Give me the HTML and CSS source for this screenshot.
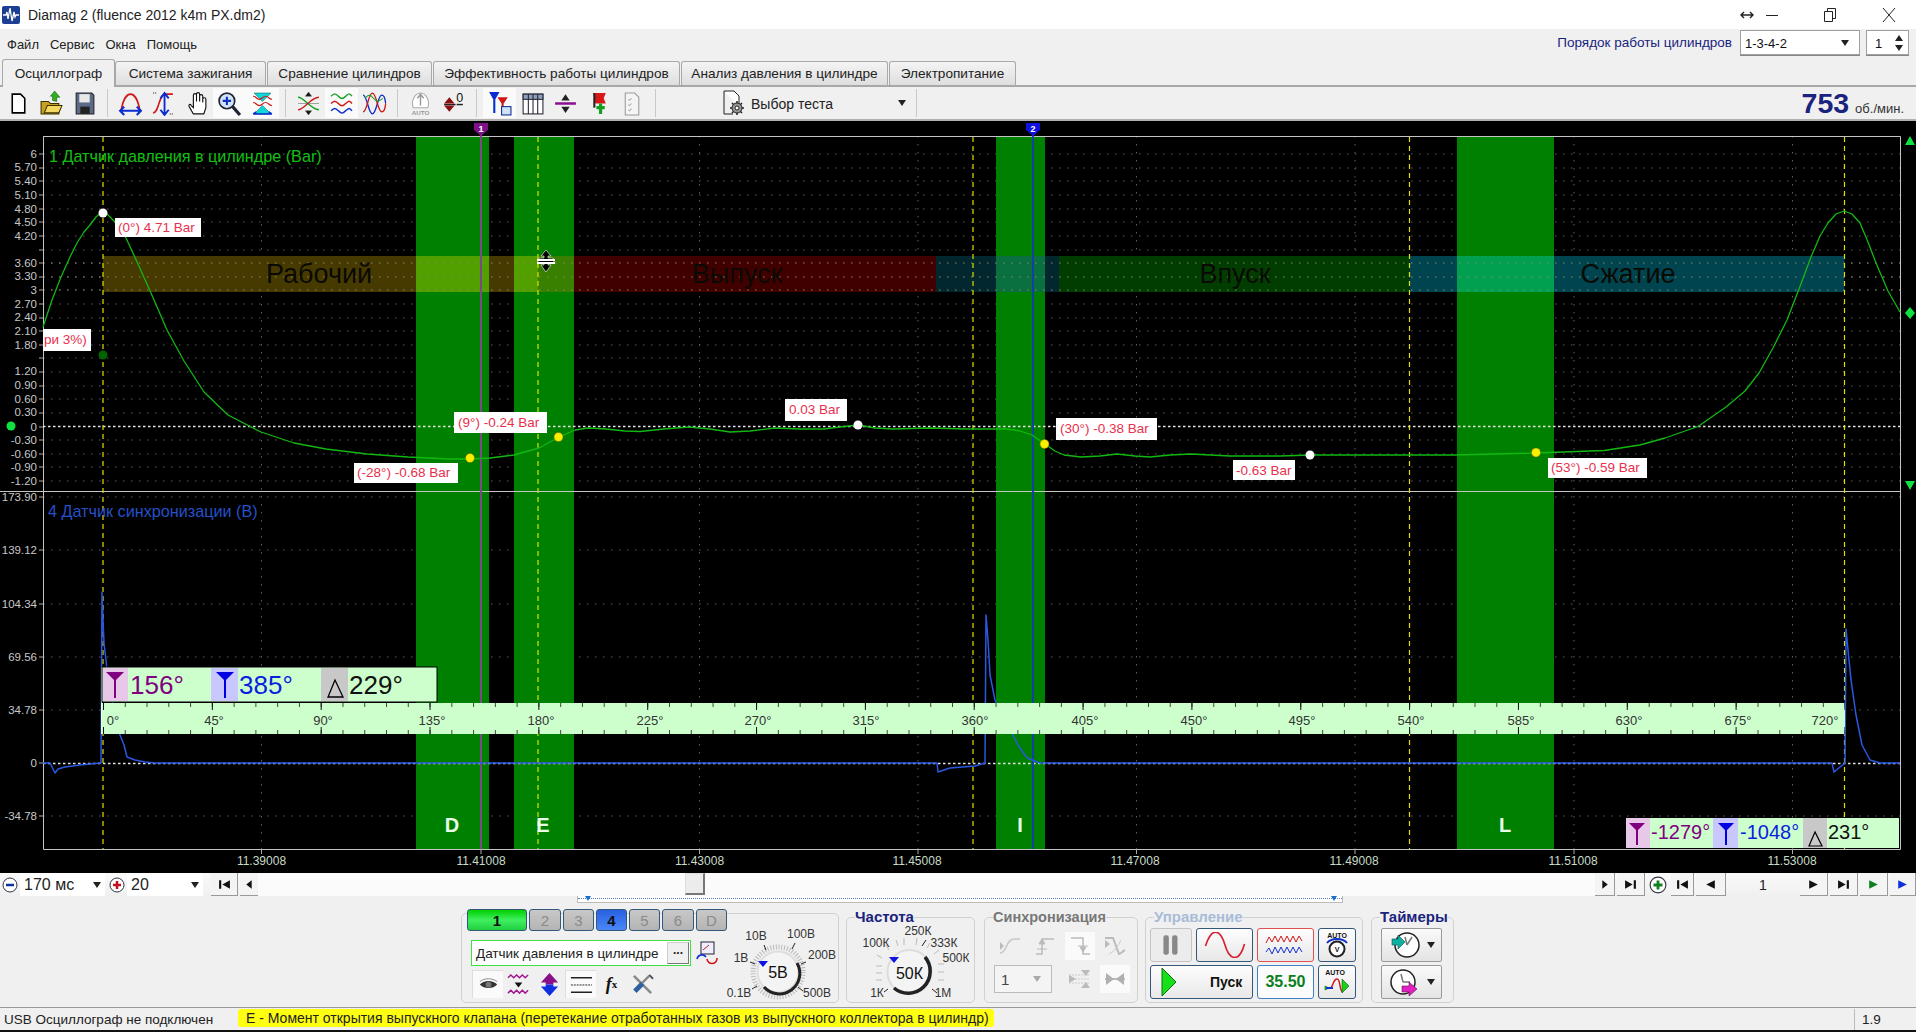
FILE: index.html
```html
<!DOCTYPE html>
<html lang="ru">
<head>
<meta charset="utf-8">
<title>Diamag 2</title>
<link rel="stylesheet" href="styles.css">
</head>
<body>
<div class="app">

<header class="titlebar">
  <svg class="app-icon" viewBox="0 0 18 18"><rect width="18" height="18" rx="2" fill="#1c3f94"/><path d="M1 9h3l1-3 1 7 2-11 2 13 2-9 1 5 1-2h3" fill="none" stroke="#fff" stroke-width="1.3"/></svg>
  <span class="title-text">Diamag 2 (fluence 2012 k4m PX.dm2)</span>
  <div class="win-controls">
    <svg class="wc-resize" viewBox="0 0 14 10"><path d="M1 5h12M4 2 1 5l3 3M10 2l3 3-3 3" fill="none" stroke="#222" stroke-width="1.4"/></svg>
    <svg class="wc-min" viewBox="0 0 12 12"><path d="M0 6.5h12" stroke="#222" stroke-width="1"/></svg>
    <svg class="wc-max" viewBox="0 0 12 14"><path d="M.5 3.5h8v10h-8zM3.5 3.5v-3h8v10h-3" fill="none" stroke="#222"/></svg>
    <svg class="wc-close" viewBox="0 0 14 14"><path d="M1 0l12 14M13 0 1 14" stroke="#222" stroke-width="1"/></svg>
  </div>
</header>

<div class="menurow">
  <nav class="menu"><span>Файл</span><span>Сервис</span><span>Окна</span><span>Помощь</span></nav>
  <div class="order">
    <span class="order-label">Порядок работы цилиндров</span>
    <div class="combo order-combo"><span>1-3-4-2</span><i class="arrow-down"></i></div>
    <div class="combo order-spin"><span>1</span><div class="spin"><i class="arrow-up"></i><i class="arrow-down"></i></div></div>
  </div>
</div>

<div class="tabs">
  <div class="tab active tab-a">Осциллограф</div>
  <div class="tab tab-b">Система зажигания</div>
  <div class="tab tab-c">Сравнение цилиндров</div>
  <div class="tab tab-d">Эффективность работы цилиндров</div>
  <div class="tab tab-e">Анализ давления в цилиндре</div>
  <div class="tab tab-f">Электропитание</div>
</div>

<div class="toolbar">
  <div class="tb"><svg viewBox="0 0 24 24"><path d="M6 3h8l4 4v14H6z" fill="#fff" stroke="#000" stroke-width="1.5"/></svg></div>
  <div class="tb"><svg viewBox="0 0 24 24"><path d="M2 10h7l2 2h8v10H2z" fill="#c8a020" stroke="#3a3000"/><path d="M5 21l3-7h14l-3 7z" fill="#f5d860" stroke="#3a3000"/><path d="M13 9V5h-2l4-5 5 6h-3v4z" fill="#30b020" stroke="#0a5000" stroke-width=".5"/></svg></div>
  <div class="tb"><svg viewBox="0 0 24 24"><path d="M4 2h15l2 2v18H4z" fill="#5a6a88" stroke="#222"/><rect x="7" y="3" width="10" height="8" fill="#e8e8e8"/><rect x="8" y="15" width="9" height="7" fill="#222"/></svg></div>
  <i class="sep"></i>
  <div class="tb"><svg viewBox="0 0 24 24"><path d="M3 19C5 7 9 3 12 3s7 4 9 16" fill="none" stroke="#d01818" stroke-width="1.6"/><path d="M2 19h20M6 15l-4 4 4 4M18 15l4 4-4 4" fill="none" stroke="#0a2cd0" stroke-width="2"/></svg></div>
  <div class="tb"><svg viewBox="0 0 24 24"><path d="M2 21c6 0 5-18 12-18 3 0 4 0 7 0" fill="none" stroke="#d01818" stroke-width="1.5"/><path d="M13 22V3M9 7l4-5 4 5M9 18l4 5 4-5" fill="none" stroke="#0a2cd0" stroke-width="1.8"/><path d="M2 2h4M18 22h4" stroke="#222" stroke-dasharray="1 1"/></svg></div>
  <div class="tb"><svg viewBox="0 0 24 24"><path d="M9 22l-4-7c-1-2 1-3 2-1l2 2V4c0-2 3-2 3 0v6V3c0-2 3-2 3 0v7V5c0-2 3-2 3 0v6-3c0-2 3-2 3 0v8l-2 6z" fill="#fff" stroke="#111" stroke-width="1.1"/></svg></div>
  <div class="tb on"><svg viewBox="0 0 24 24"><circle cx="9.5" cy="9.5" r="7.5" fill="#cfe2f6" stroke="#223" stroke-width="1.6"/><path d="M9.5 5.500v8M5.500 9.500h8" stroke="#1030c0" stroke-width="2"/><path d="M15 15l7 8" stroke="#223" stroke-width="3"/></svg></div>
  <div class="tb on"><svg viewBox="0 0 24 24"><path d="M4 2h16l-8 8zM12 14l8 8H4z" fill="#10d8d8" stroke="#087070" stroke-width=".6"/><path d="M3 5c3 0 3 3 6 3s3-3 6-3 3 3 6 3M3 11c3 0 3 3 6 3s3-3 6-3 3 3 6 3" fill="none" stroke="#d01818" stroke-width="1.1"/><path d="M3 22h18M3 22l3-2M21 22l-3-2" stroke="#0a2cd0" stroke-width="1.4" fill="none"/></svg></div>
  <i class="sep"></i>
  <div class="tb"><svg viewBox="0 0 24 24"><path d="M2 6c6 0 12 12 20 12" fill="none" stroke="#10a020" stroke-width="1.3"/><path d="M2 18C8 18 14 6 22 6" fill="none" stroke="#d01818" stroke-width="1.3"/><path d="M12 1l-3 4h6zM12 23l-3-4h6zM2 12h20" fill="#111" stroke="#555" stroke-width=".5"/></svg></div>
  <div class="tb on"><svg viewBox="0 0 24 24"><path d="M2 5c3-3 4-3 7 0s4 3 7 0 4-3 6 0" fill="none" stroke="#10a020" stroke-width="1.4"/><path d="M2 12c3-3 4-3 7 0s4 3 7 0 4-3 6 0" fill="none" stroke="#d01818" stroke-width="1.4"/><path d="M2 19c3-3 4-3 7 0s4 3 7 0 4-3 6 0" fill="none" stroke="#0a2cd0" stroke-width="1.4"/></svg></div>
  <div class="tb"><svg viewBox="0 0 24 24"><path d="M1 4c4 0 5 18 9 18s5-18 9-18 3 8 4 8" fill="none" stroke="#0a2cd0" stroke-width="1.3"/><path d="M1 20c4 0 5-18 9-18s5 18 9 18 3-8 4-8" fill="none" stroke="#d01818" stroke-width="1.3"/><path d="M3 7c3-4 5-4 8 0s5 3 9 0" fill="none" stroke="#10a020"/></svg></div>
  <i class="sep"></i>
  <div class="tb"><svg viewBox="0 0 24 24"><path d="M12 2a8 10 0 0 0-7 14h14A8 10 0 0 0 12 2z" fill="#fff" stroke="#aaa"/><path d="M12 3v11M9 7l3-4 3 4" fill="none" stroke="#999" stroke-width="1.4"/><text class="tb-auto" x="12" y="23">AUTO</text></svg></div>
  <div class="tb"><svg viewBox="0 0 24 24"><path d="M3 13h11" stroke="#222" stroke-width="1.4"/><path d="M8 6l5 6H3zM8 20l-5-6h10z" fill="#8a1010"/><text class="tb-zero" x="18" y="11">0</text><path d="M15 13h6" stroke="#222" stroke-width="1.4"/></svg></div>
  <i class="sep"></i>
  <div class="tb on"><svg viewBox="0 0 24 24"><path d="M2 1h10L8 8v13H6V8z" fill="#0a2cd0"/><path d="M10 6h10l-4 6v6h-2v-6z" fill="#d01818"/><rect x="14" y="15" width="9" height="8" fill="#cfe0f8" stroke="#0a2c90"/></svg></div>
  <div class="tb"><svg viewBox="0 0 24 24"><rect x="3" y="3" width="19" height="19" fill="#fff" stroke="#223"/><rect x="3" y="3" width="19" height="5" fill="#8ea0b8" stroke="#223"/><path d="M8 3v19M12.500 3v19M17 3v19" stroke="#223"/></svg></div>
  <div class="tb"><svg viewBox="0 0 24 24"><path d="M2 12h20" stroke="#8a1090" stroke-width="2.400"/><path d="M12 3l-4 6h8zM12 21l-4-6h8z" fill="#222"/></svg></div>
  <div class="tb"><svg viewBox="0 0 24 24"><path d="M7 2h12l-2 5 2 5H9" fill="#d81818"/><path d="M8 2v14" stroke="#222" stroke-width="2"/><path d="M10 16h8M14 12v10" stroke="#10a020" stroke-width="3"/></svg></div>
  <div class="tb"><svg viewBox="0 0 24 24"><path d="M6 2h9l4 4v17H6z" fill="#f4f4f4" stroke="#999"/><path d="M9 8l1 1 2-2M9 13l1 1 2-2M9 18l1 1 2-2" fill="none" stroke="#aaa"/></svg></div>
  <i class="sep sep-wide"></i>
  <div class="test-select">
    <svg viewBox="0 0 24 26"><path d="M3 1h10l5 5v10" fill="#fff" stroke="#222"/><path d="M3 1v23h9" fill="none" stroke="#222"/><circle cx="16" cy="18" r="5" fill="#999" stroke="#222"/><circle cx="16" cy="18" r="2" fill="#fff" stroke="#222"/><path d="M16 11v2M16 23v2M9 18h2M21 18h2M11 13l1.500 1.500M21 23l-1.500-1.500M11 23l1.500-1.500M21 13l-1.500 1.500" stroke="#222" stroke-width="1.500"/></svg>
    <span>Выбор теста</span>
    <i class="arrow-down"></i>
  </div>
  <i class="sep sep-end"></i>
  <div class="rpm"><b>753</b><span>об./мин.</span></div>
</div>

<svg class="plot" viewBox="0 121 1916 752" preserveAspectRatio="none">
  <defs>
    <pattern id="minor" patternUnits="userSpaceOnUse" x="103" y="703" width="21.77" height="31"><path d="M.5 0v4M.5 27v4" stroke="#444"/></pattern>
    <pattern id="major" patternUnits="userSpaceOnUse" x="103" y="703" width="108.84" height="31"><path d="M.5 0v7M.5 24v7" stroke="#111"/></pattern>
  </defs>
  <rect x="0" y="121" width="1916" height="752" fill="#000"/>

  <path class="grid" d="M43 154H1900M43 168H1900M43 181H1900M43 195H1900M43 209H1900M43 222H1900M43 236H1900M43 250H1900M43 263H1900M43 277H1900M43 290H1900M43 304H1900M43 318H1900M43 331H1900M43 345H1900M43 358H1900M43 372H1900M43 386H1900M43 399H1900M43 413H1900M43 440H1900M43 454H1900M43 467H1900M43 481H1900M43 497H1900M43 550H1900M43 604H1900M43 657H1900M43 710H1900M43 816H1900"/>
  <path class="grid" d="M261.500 136V849M481 136V849M699.500 136V849M918 136V849M1136.500 136V849M1355 136V849M1574 136V849M1792.500 136V849"/>

  <rect class="band" x="416" y="137" width="73" height="712"/>
  <rect class="band" x="514" y="137" width="60" height="712"/>
  <rect class="band" x="996" y="137" width="49" height="712"/>
  <rect class="band" x="1457" y="137" width="97" height="712"/>

  <rect x="103" y="256" width="435" height="36" fill="#463a00"/>
  <rect x="538" y="256" width="398" height="36" fill="#400000"/>
  <rect x="936" y="256" width="123" height="36" fill="#02272e"/>
  <rect x="1059" y="256" width="350.500" height="36" fill="#013d00"/>
  <rect x="1409.500" y="256" width="435" height="36" fill="#00444f"/>
  <rect x="416" y="256" width="73" height="36" fill="#52a000"/>
  <rect x="514" y="256" width="24" height="36" fill="#52a000"/>
  <rect x="538" y="256" width="36" height="36" fill="#3a8000"/>
  <rect x="996" y="256" width="49" height="36" fill="#0a7040"/>
  <rect x="1457" y="256" width="97" height="36" fill="#00a050"/>
  <path class="grid-dim" d="M43 263H1900M43 277H1900M43 290H1900"/>

  <text class="phase" x="319" y="283">Рабочий</text>
  <text class="phase" x="737" y="283">Выпуск</text>
  <text class="phase" x="1235" y="283">Впуск</text>
  <text class="phase" x="1628" y="283">Сжатие</text>

  <path class="plot-frame" d="M43 136.500H1900.500V849.500H43.500V136.500M0 491.500H1900.500"/>
  <path class="zero" d="M43 426.500H1900M43 763.500H1900"/>
  <path class="yellow" d="M103 137V849M538 137V849M973 137V849M1409.500 137V849M1844.500 137V849"/>

  <path class="cursor-1" d="M481 128V849"/>
  <path class="cursor-2" d="M1033 128V849"/>
  <path d="M474 123h14v7l-7 6-7-6z" fill="#80108a"/>
  <text class="flag" x="481" y="132">1</text>
  <path d="M1026 123h14v7l-7 6-7-6z" fill="#1010e0"/>
  <text class="flag" x="1033" y="132">2</text>

  <polyline class="curve" points="43,327 52,300 61,277 70,257 77,243 84,232 90,225 96,217 100,213.500 103,212.500 107,214 114,221 120,229 126,238 138,264 151,293 167,330 184,361 204,392 228,415 261,432 294,443 326,449 367,454 408,457 449,459 469,459 490,458 514,455 539,448 559,437 575,430 588,428 606,429 625,431 640,431.500 664,429 689,427 710,429 730,432 750,431 775,428 800,429 824,429 840,427 858,425 875,428 893,429 930,428 966,429 1007,429 1020,431 1032,435 1045,444 1055,451 1064,455 1081,457 1100,456 1117,454 1135,456 1150,457 1170,455 1191,454 1230,456 1280,456 1310,455 1454,455 1536,453 1604,450.500 1640,445 1665,438 1698,426.500 1726,407 1745,391 1759,373 1773,348 1787,320 1799,289 1811,257 1820,236 1828,223 1836,214 1844,211 1852,214 1860,223 1868,242 1876,263 1888,291 1900,312"/>
  <polyline class="sync" points="43,763 50,763 55,773 58,769 65,767 80,765 100,763 101,763 102,592 103,620 104,643 106,660 108,680 112,700 120,735 124,745 127,757 135,760 145,762 155,763 937,763 938,772 950,768 975,766 985,763 986,615 988,640 990,675 995,700 1005,725 1012,733 1018,745 1027,758 1040,763 1832,763 1834,772 1845,763 1846,629 1848,650 1851,680 1856,715 1862,745 1870,760 1880,763 1900,763"/>

  <circle class="dot-w" cx="103" cy="213" r="4.500"/>
  <circle cx="103" cy="355" r="4.500" fill="#006400"/>
  <circle cx="11" cy="426" r="4.500" fill="#10e040"/>
  <circle class="dot-y" cx="470" cy="458" r="4.500"/>
  <circle class="dot-y" cx="558.500" cy="437" r="4.500"/>
  <circle class="dot-w" cx="858" cy="425" r="4.500"/>
  <circle class="dot-y" cx="1044.500" cy="444" r="4.500"/>
  <circle class="dot-w" cx="1310" cy="455" r="4.500"/>
  <circle class="dot-y" cx="1536" cy="452.500" r="4.500"/>

  <rect class="tag" x="115" y="218" width="86" height="19"/><text class="tag-t" x="118" y="232">(0°) 4.71 Bar</text>
  <rect class="tag" x="43" y="329" width="48" height="22"/><text class="tag-t" x="44" y="344">ри 3%)</text>
  <rect class="tag" x="354" y="463" width="104" height="20"/><text class="tag-t" x="357" y="477">(-28°) -0.68 Bar</text>
  <rect class="tag" x="454" y="412" width="93" height="21"/><text class="tag-t" x="458" y="427">(9°) -0.24 Bar</text>
  <rect class="tag" x="785" y="399" width="62" height="22"/><text class="tag-t" x="789" y="414">0.03 Bar</text>
  <rect class="tag" x="1056" y="418" width="101" height="22"/><text class="tag-t" x="1060" y="433">(30°) -0.38 Bar</text>
  <rect class="tag" x="1233" y="460" width="62" height="20"/><text class="tag-t" x="1236" y="475">-0.63 Bar</text>
  <rect class="tag" x="1548" y="458" width="99" height="20"/><text class="tag-t" x="1551" y="472">(53°) -0.59 Bar</text>

  <text class="sig-1" x="49" y="162">1 Датчик давления в цилиндре (Bar)</text>
  <text class="sig-4" x="48" y="517">4 Датчик синхронизации (В)</text>

  <g class="axis">
    <text x="37" y="158">6</text><text x="37" y="171">5.70</text><text x="37" y="185">5.40</text><text x="37" y="199">5.10</text><text x="37" y="213">4.80</text><text x="37" y="226">4.50</text><text x="37" y="240">4.20</text><text x="37" y="267">3.60</text><text x="37" y="280">3.30</text><text x="37" y="294">3</text><text x="37" y="308">2.70</text><text x="37" y="321">2.40</text><text x="37" y="335">2.10</text><text x="37" y="349">1.80</text><text x="37" y="375">1.20</text><text x="37" y="389">0.90</text><text x="37" y="403">0.60</text><text x="37" y="416">0.30</text><text x="37" y="431">0</text><text x="37" y="444">-0.30</text><text x="37" y="458">-0.60</text><text x="37" y="471">-0.90</text><text x="37" y="485">-1.20</text>
    <text x="37" y="501">173.90</text><text x="37" y="554">139.12</text><text x="37" y="608">104.34</text><text x="37" y="661">69.56</text><text x="37" y="714">34.78</text><text x="37" y="767">0</text><text x="37" y="820">-34.78</text>
  </g>
  <path class="axis-tick" d="M39 154h4M39 168h4M39 181h4M39 195h4M39 209h4M39 222h4M39 236h4M39 250h4M39 263h4M39 277h4M39 290h4M39 304h4M39 318h4M39 331h4M39 345h4M39 358h4M39 372h4M39 386h4M39 399h4M39 413h4M39 427h4M39 440h4M39 454h4M39 467h4M39 481h4M39 497h4M39 550h4M39 604h4M39 657h4M39 710h4M39 763h4M39 816h4M261.500 849v5M481 849v5M699.500 849v5M918 849v5M1136.500 849v5M1355 849v5M1574 849v5M1792.500 849v5"/>

  <g class="time">
    <text x="261.500" y="865">11.39008</text><text x="481" y="865">11.41008</text><text x="699.500" y="865">11.43008</text><text x="917" y="865">11.45008</text><text x="1135" y="865">11.47008</text><text x="1354" y="865">11.49008</text><text x="1573" y="865">11.51008</text><text x="1792" y="865">11.53008</text>
  </g>

  <g class="letters"><text x="452" y="832">D</text><text x="543" y="832">E</text><text x="1020" y="832">I</text><text x="1505" y="832">L</text></g>

  <rect x="101" y="703" width="1744" height="31" fill="#ccffcc"/>
  <rect x="103" y="703" width="1742" height="31" fill="url(#minor)"/>
  <rect x="103" y="703" width="1742" height="31" fill="url(#major)"/>
  <path d="M101.500 667V734" stroke="#e8ffe8"/>
  <g class="deg">
    <text x="113" y="725">0°</text><text x="214" y="725">45°</text><text x="323" y="725">90°</text><text x="432" y="725">135°</text><text x="541" y="725">180°</text><text x="650" y="725">225°</text><text x="758" y="725">270°</text><text x="866" y="725">315°</text><text x="975" y="725">360°</text><text x="1085" y="725">405°</text><text x="1194" y="725">450°</text><text x="1302" y="725">495°</text><text x="1411" y="725">540°</text><text x="1521" y="725">585°</text><text x="1629" y="725">630°</text><text x="1738" y="725">675°</text><text x="1825" y="725">720°</text>
  </g>

  <rect x="102" y="667" width="335" height="35" fill="#ccffcc" stroke="#000"/>
  <rect x="103" y="668" width="25" height="33" fill="#e8c8e8"/>
  <rect x="211" y="668" width="27" height="33" fill="#c8c8ff"/>
  <rect x="321" y="668" width="27" height="33" fill="#c8c8c8"/>
  <path d="M106 672h18l-8 8v18h-2v-18z" fill="#800080"/>
  <path d="M216 672h18l-8 8v18h-2v-18z" fill="#0000e0"/>
  <path d="M335 680l-7 17h15z" fill="none" stroke="#000" stroke-width="1.300"/>
  <text class="big p" x="130" y="694">156°</text>
  <text class="big b" x="239" y="694">385°</text>
  <text class="big k" x="349" y="694">229°</text>

  <rect x="1626" y="818" width="273" height="30" fill="#ccffcc"/>
  <rect x="1626" y="818" width="24" height="30" fill="#e8c8e8"/>
  <rect x="1713" y="818" width="25" height="30" fill="#c8c8ff"/>
  <rect x="1803" y="818" width="24" height="30" fill="#c8c8c8"/>
  <path d="M1629 823h16l-7 7v15h-2v-15z" fill="#800080"/>
  <path d="M1718 823h16l-7 7v15h-2v-15z" fill="#0000e0"/>
  <path d="M1815 832l-6 14h13z" fill="none" stroke="#000" stroke-width="1.200"/>
  <text class="mid p" x="1651" y="839">-1279°</text>
  <text class="mid b" x="1740" y="839">-1048°</text>
  <text class="mid k" x="1828" y="839">231°</text>

  <path d="M1905 145l5-9 5 9zM1905 481l5 9 5-9zM1910 307l5 6-5 6-5-6z" fill="#10e040"/>
  <path d="M546 250l-5 6h3v2h-4l-2 1v3l2 1h4v2h-3l5 7 5-7h-3v-2h4l2-1v-3l-2-1h-4v-2h3z" fill="#000" stroke="#fff" stroke-width=".6"/>
  <path d="M537 259h18v2h-18zM537 262h18v2h-18z" fill="#fff"/>
</svg>

<div class="timebar">
  <div class="tc-left">
    <svg class="circ" viewBox="0 0 16 16"><circle cx="8" cy="8" r="7" fill="#fff" stroke="#334"/><path d="M4 8h8" stroke="#1030a0" stroke-width="2.500"/></svg>
    <div class="t-combo t-c1"><span>170 мс</span><i class="arrow-down"></i></div>
    <svg class="circ" viewBox="0 0 16 16"><circle cx="8" cy="8" r="7" fill="#fff" stroke="#334"/><path d="M4 8h8M8 4v8" stroke="#c01020" stroke-width="2.500"/></svg>
    <div class="t-combo t-c2"><span>20</span><i class="arrow-down"></i></div>
    <div class="nav nav-s"><svg viewBox="0 0 12 12"><path d="M1 2h2v8H1zM11 2v8L4 6z" fill="#111"/></svg></div>
    <div class="nav nav-t"><svg viewBox="0 0 12 12"><path d="M8 2v8L3 6z" fill="#111"/></svg></div>
  </div>
  <div class="track"><div class="thumb"></div></div>
  <div class="tc-right">
    <div class="nav n20"><svg viewBox="0 0 12 12"><path d="M4 2v8l5-4z" fill="#111"/></svg></div>
    <div class="nav n28"><svg viewBox="0 0 12 12"><path d="M1 2v8l7-4zM9 2h2v8H9z" fill="#111"/></svg></div>
    <svg class="circ nplus" viewBox="0 0 16 16"><circle cx="8" cy="8" r="7" fill="#fff" stroke="#334"/><path d="M4 8h8M8 4v8" stroke="#108020" stroke-width="2.500"/></svg>
    <div class="nav n23"><svg viewBox="0 0 12 12"><path d="M1 2h2v8H1zM11 2v8L4 6z" fill="#111"/></svg></div>
    <div class="nav n30"><svg viewBox="0 0 12 12"><path d="M10 2v8L2 6z" fill="#111"/></svg></div>
    <div class="frame-no">1</div>
    <div class="nav n28"><svg viewBox="0 0 12 12"><path d="M2 2v8l8-4z" fill="#111"/></svg></div>
    <div class="nav n28"><svg viewBox="0 0 12 12"><path d="M1 2v8l7-4zM9 2h2v8H9z" fill="#111"/></svg></div>
    <div class="nav n28"><svg viewBox="0 0 12 12"><path d="M2 2v8l8-4z" fill="#108020"/></svg></div>
    <div class="nav n26"><svg viewBox="0 0 12 12"><path d="M2 2v8l8-4z" fill="#1030e0"/></svg></div>
  </div>
</div>

<section class="panel">
  <div class="strip"><i class="strip-a"></i><i class="strip-b"></i></div>
  <div class="groups">

    <div class="channel">
      <div class="chan-left">
        <div class="chan-btns">
          <div class="ch c-green w60">1</div><div class="ch c-off w32">2</div><div class="ch c-off w31">3</div><div class="ch c-blue w31">4</div><div class="ch c-off w31">5</div><div class="ch c-off w32">6</div><div class="ch c-off w31">D</div>
        </div>
        <div class="chan-sel">
          <div class="selector"><span>Датчик давления в цилиндре</span><div class="more">...</div></div>
          <svg class="meter" viewBox="0 0 24 24"><rect x="6" y="1" width="13" height="12" fill="#eef" stroke="#223"/><path d="M8 9l6-5" stroke="#c02020"/><path d="M2 18a5 5 0 0 1 9-2" fill="none" stroke="#1030d0" stroke-width="1.600"/><path d="M12 18a5 5 0 0 0 10-1" fill="none" stroke="#d01818" stroke-width="1.600"/></svg>
        </div>
        <div class="chan-icons">
          <div class="ci on"><svg viewBox="0 0 24 24"><path d="M3 12c4-5 14-5 18 0-4 5-14 5-18 0z" fill="#333"/><circle cx="12" cy="12" r="3" fill="#777"/><path d="M3 9c5-4 13-4 18 0" fill="none" stroke="#888"/></svg></div>
          <div class="ci"><svg viewBox="0 0 24 24"><path d="M1 5l3-3 3 3 3-3 3 3 3-3 3 3 3-3" fill="none" stroke="#a01890" stroke-width="1.500"/><path d="M1 21l3-3 3 3 3-3 3 3 3-3 3 3 3-3" fill="none" stroke="#a01890" stroke-width="1.500"/><path d="M8 10h8l-4 5z" fill="#111"/></svg></div>
          <div class="ci"><svg viewBox="0 0 24 24"><path d="M12 0l9 10h-5v2H8v-2H3z" fill="#8a108a"/><path d="M12 24l9-10h-5v-2H8v2H3z" fill="#1030e0"/></svg></div>
          <div class="ci on"><svg viewBox="0 0 24 24"><path d="M1 5h22M1 20h22" stroke="#222" stroke-width="1.500"/><path d="M1 12.500h22" stroke="#222" stroke-dasharray="2 1"/></svg></div>
          <div class="ci fx"><em>f</em><small>x</small></div>
          <div class="ci"><svg viewBox="0 0 24 24"><path d="M3 3l18 18" stroke="#888" stroke-width="2.500"/><path d="M19 3l-9 9" stroke="#888" stroke-width="2.500"/><path d="M12 11l-8 8" stroke="#3060a0" stroke-width="5"/><path d="M19 2l4 4" stroke="#555" stroke-width="2"/></svg></div>
        </div>
      </div>
      <svg class="knob-v" viewBox="725 926 112 74">
        <circle cx="778" cy="972" r="25" fill="none" stroke="#b8b8b8" stroke-width="5" stroke-dasharray="1 1.800"/>
        <circle cx="778" cy="972" r="20.500" fill="#f4f4f4" stroke="#ddd" stroke-width="2"/>
        <path d="M764 987a20.500 20.500 0 0 0 33-24" fill="none" stroke="#222" stroke-width="3"/>
        <path class="knob-tick" d="M757 986l-5 3M755 964l-5-2M766 950l-2-5M792 949l3-6M801 964l5-2M798 987l5 4"/>
        <path d="M758 961h10l-5 6z" fill="#1010e0"/>
        <g class="knob-l"><text x="756" y="940">10В</text><text x="801" y="938">100В</text><text x="822" y="959">200В</text><text x="741" y="962">1В</text><text x="817" y="997">500В</text><text x="739" y="997">0.1В</text></g>
        <text class="knob-c" x="778" y="978">5В</text>
      </svg>
    </div>

    <fieldset class="g g-freq">
      <legend class="lg-navy">Частота</legend>
      <svg class="knob-f" viewBox="846 925 127 75">
        <path class="knob-tick-l" d="M881 958l-5-3M881 966h-6M881 973h-6M881 980h-6M888 950l-3-5M897 946l-2-6M903 945v-7M915 945l1-7M926 948l3-5M933 954l5-4M937 964h6M937 972h6M937 980h6"/>
        <path class="knob-tick" d="M887 989l-4 3M931 989l5 4M921 946l4-6"/>
        <circle cx="908.500" cy="972" r="22" fill="#f4f4f4" stroke="#ddd" stroke-width="2"/>
        <path d="M893 988a22 22 0 0 0 31-31" fill="none" stroke="#222" stroke-width="3.500"/>
        <path d="M888 957h10l-5 6z" fill="#1010e0"/>
        <g class="knob-l"><text x="917" y="935">250К</text><text x="875" y="947">100К</text><text x="943" y="947">333К</text><text x="955" y="962">500К</text><text x="876" y="997">1К</text><text x="942" y="997">1М</text></g>
        <text class="knob-c" x="908.500" y="979">50К</text>
      </svg>
    </fieldset>

    <fieldset class="g g-sync">
      <legend class="lg-grey">Синхронизация</legend>
      <div class="sync-grid">
        <div class="si"><svg viewBox="0 0 24 24"><path d="M2 19c7 0 6-14 14-14h6" fill="none" stroke="#c8c8c8" stroke-width="1.500"/><path d="M2 8l4 4-4 4z" fill="#bbb"/></svg></div>
        <div class="si"><svg viewBox="0 0 24 24"><path d="M3 20h6V5h12" fill="none" stroke="#bbb" stroke-width="1.500"/><path d="M9 5l-3 5h6zM4 15h10" fill="#bbb" stroke="#bbb"/></svg></div>
        <div class="si on"><svg viewBox="0 0 24 24"><path d="M3 4h12v16h7" fill="none" stroke="#bbb" stroke-width="1.500"/><path d="M15 18l-3-5h6zM10 12h10" fill="#bbb" stroke="#bbb"/></svg></div>
        <div class="si"><svg viewBox="0 0 24 24"><path d="M2 4h8l6 16c2 0 4-3 6-4" fill="none" stroke="#bbb" stroke-width="2"/><path d="M2 6l5 4-5 4z" fill="#bbb"/><path d="M6 20c5-2 9-8 12-14" fill="none" stroke="#ccc"/></svg></div>
        <div class="sync-combo"><span>1</span><i class="arrow-down"></i></div>
        <div class="si"><svg viewBox="0 0 24 24"><path d="M1 8h20M1 12h20M1 16h20" stroke="#ccc" stroke-dasharray="2 1"/><path d="M1 8l7 4-7 4zM13 3h9l-4 6zM13 21h9l-4-6z" fill="#bbb"/></svg></div>
        <div class="si on"><svg viewBox="0 0 24 24"><path d="M2 12h20" stroke="#bbb" stroke-width="2"/><path d="M3 6l8 6-8 6zM21 6l-8 6 8 6z" fill="#b0b0b0"/></svg></div>
      </div>
    </fieldset>

    <fieldset class="g g-ctrl">
      <legend class="lg-pale">Управление</legend>
      <div class="ctrl-grid">
        <div class="cb cb-grey"><svg viewBox="0 0 24 24"><rect x="5" y="3" width="5" height="18" rx="2" fill="#888"/><rect x="13" y="3" width="5" height="18" rx="2" fill="#888"/></svg></div>
        <div class="cb"><svg class="wide" viewBox="0 0 40 24"><path d="M2 13C8-6 16-2 20 12s13 17 18-1" fill="none" stroke="#d82030" stroke-width="1.500"/></svg></div>
        <div class="cb cb-red"><svg class="wide" viewBox="0 0 44 26"><path d="M2 11l3-6 3 5 3-6 3 6 3-6 3 6 3-6 3 6 3-6 3 6 3-6 3 5" fill="none" stroke="#d01818"/><path d="M2 20l3-4 3 6 3-7 3 6 3-6 3 6 3-6 3 6 3-6 3 6 3-6 3 5" fill="none" stroke="#1030d0"/></svg></div>
        <div class="cb"><svg viewBox="0 0 26 28"><text class="auto" x="13" y="7">AUTO</text><path d="M3 12a11 7 0 0 1 20 0" fill="none" stroke="#1030d0" stroke-width="2"/><circle cx="13" cy="18" r="7.500" fill="#fff" stroke="#222" stroke-width="2"/><text class="auto" x="13" y="21">V</text></svg></div>
        <div class="cb cb-start"><svg class="play" viewBox="0 0 16 30"><path d="M1 1l14 14L1 29z" fill="#18e018" stroke="#0a7010"/></svg><b>Пуск</b></div>
        <div class="cb cb-num">35.50</div>
        <div class="cb"><svg viewBox="0 0 26 28"><text class="auto" x="11" y="7">AUTO</text><path d="M2 20h4c3 0 3-9 7-9s2 13 6 13" fill="none" stroke="#d01818" stroke-width="1.500"/><path d="M1 18l4 2-4 2zM18 11l7 7-7 7z" fill="#18d018" stroke="#086008" stroke-width=".6"/><path d="M2 20h7" stroke="#1030d0" stroke-width="2"/></svg></div>
      </div>
    </fieldset>

    <fieldset class="g g-time">
      <legend class="lg-navy">Таймеры</legend>
      <div class="timer-col">
        <div class="tmb"><svg viewBox="0 0 30 28"><circle cx="17" cy="14" r="12" fill="#fff" stroke="#222" stroke-width="1.500"/><path d="M17 14l-2-8M17 14l5-8" stroke="#777" stroke-width="1.500"/><path d="M2 8h6V4l7 7-7 7v-4H2z" fill="#10b0a0" stroke="#085050" stroke-width=".6"/></svg><i class="arrow-down"></i></div>
        <div class="tmb"><svg viewBox="0 0 30 28"><circle cx="13" cy="14" r="12" fill="#fff" stroke="#222" stroke-width="1.500"/><path d="M13 14l-2-8M13 14h7" stroke="#777" stroke-width="1.500"/><path d="M12 18h7v-4l8 7-8 7v-4h-7z" fill="#e020c0" stroke="#601050" stroke-width=".6"/></svg><i class="arrow-down"></i></div>
      </div>
    </fieldset>

  </div>
</section>

<footer class="status">
  <div class="st-left">USB Осциллограф не подключен</div>
  <div class="st-msg"><span>Е - Момент открытия выпускного клапана (перетекание отработанных газов из выпускного коллектора в цилиндр)</span></div>
  <div class="st-ver">1.9</div>
</footer>
<div class="blackline"></div>

</div>
</body>
</html>
```
FILE: styles.css
```css
* { box-sizing: border-box; }
html, body { margin: 0; padding: 0; }
body { font-family: "Liberation Sans", Arial, sans-serif; background: #f0f0f0; color: #111; overflow: hidden; }
.app { width: 1916px; height: 1032px; display: flex; flex-direction: column; overflow: hidden; }
i { display: block; font-style: normal; }

.titlebar { height: 29px; background: #fff; display: flex; align-items: center; padding-left: 2px; }
.app-icon { width: 18px; height: 18px; margin-right: 8px; }
.title-text { font-size: 14px; color: #222; }
.win-controls { margin-left: auto; display: flex; align-items: center; width: 183px; height: 29px; }
.wc-resize { width: 14px; height: 10px; margin-left: 7px; }
.wc-min { width: 12px; height: 12px; margin-left: 12px; }
.wc-max { width: 12px; height: 14px; margin-left: 46px; }
.wc-close { width: 14px; height: 14px; margin-left: 46px; }

.menurow { height: 32px; display: flex; align-items: center; justify-content: space-between; background: #f0f0f0; }
.menu { display: flex; font-size: 13px; color: #222; padding-left: 7px; gap: 11px; margin-top: -2px; }
.order { display: flex; align-items: center; height: 25px; margin-top: -5px; }
.order-label { color: #1a237e; font-size: 13.500px; margin-right: 8px; }
.combo { height: 25px; background: #fff; border: 1px solid #a0a0a0; display: flex; align-items: center; font-size: 13px; padding-left: 4px; padding-top: 1px; box-shadow: 0 1px 0 #888; }
.order-combo { width: 120px; justify-content: space-between; padding-right: 10px; }
.order-spin { width: 43px; margin: 0 7px 0 6px; padding-left: 8px; justify-content: space-between; padding-right: 5px; }
.spin { display: flex; flex-direction: column; gap: 4px; }
.arrow-down { width: 0; height: 0; border-left: 4px solid transparent; border-right: 4px solid transparent; border-top: 6px solid #222; }
.arrow-up { width: 0; height: 0; border-left: 4px solid transparent; border-right: 4px solid transparent; border-bottom: 6px solid #222; }

.tabs { height: 26px; display: flex; align-items: flex-end; padding-left: 2px; border-bottom: 2px solid #a8a8a8; position: relative; }
.tab { height: 24px; display: flex; align-items: center; justify-content: center; font-size: 13.600px; color: #222; background: linear-gradient(#f4f4f4, #dedede); border: 1px solid #a8a8a8; border-bottom: 0; border-radius: 3px 3px 0 0; }
.tab.active { height: 28px; margin-bottom: -2px; background: #f0f0f0; position: relative; z-index: 1; }
.tab-a { width: 113px; }
.tab-b { width: 151px; }
.tab-c { width: 165px; margin-left: 1px; }
.tab-d { width: 247px; margin-left: 1px; }
.tab-e { width: 207px; margin-left: 1px; }
.tab-f { width: 127px; margin-left: 1px; }

.toolbar { height: 34px; display: flex; align-items: center; padding-left: 2px; border-bottom: 2px solid #b0b0b0; }
.tb { width: 33px; height: 30px; display: flex; align-items: center; justify-content: center; }
.tb.on { background: #fafafa; }
.tb svg { width: 25px; height: 25px; }
.tb-auto { font: bold 6px "Liberation Sans", sans-serif; fill: #999; text-anchor: middle; }
.tb-zero { font: 12px "Liberation Sans", sans-serif; fill: #111; text-anchor: middle; }
.sep { width: 1px; height: 28px; background: #c8c8c8; margin: 0 6px; flex: none; }
.sep-wide { margin-left: 7px; margin-right: 0; }
.sep-end { margin: 0; }
.test-select { width: 260px; display: flex; align-items: center; padding-left: 65px; font-size: 14px; color: #222; }
.test-select svg { width: 24px; height: 26px; margin-right: 6px; }
.test-select span { width: 147px; white-space: nowrap; padding-top: 2px; }
.rpm { margin-left: auto; display: flex; align-items: baseline; padding-right: 12px; color: #1a237e; }
.rpm b { font-size: 28.500px; line-height: 30px; }
.rpm span { font-size: 13px; color: #333; margin-left: 6px; }

.plot { display: block; width: 1916px; height: 752px; flex: none; }
.grid { stroke: #5e5e5e; stroke-width: 1; stroke-dasharray: 1.5 6.5; fill: none; }
.grid-dim { stroke: #8a8a6a; stroke-width: 1; stroke-dasharray: 1.5 6.5; fill: none; }
.band { fill: #008000; }
.phase { font: 27px "Liberation Sans", sans-serif; fill: #0a0a04; text-anchor: middle; }
.plot-frame { fill: none; stroke: #c4c4c4; stroke-width: 1; }
.zero { fill: none; stroke: #e4e4e4; stroke-width: 1.300; stroke-dasharray: 2.500 2.500; }
.yellow { fill: none; stroke: #e0e000; stroke-width: 1.200; stroke-dasharray: 5 4; }
.cursor-1 { stroke: #7a4a86; stroke-width: 2; }
.cursor-2 { stroke: #1040a8; stroke-width: 2; }
.flag { font: bold 9px "Liberation Sans", sans-serif; fill: #fff; text-anchor: middle; }
.curve { fill: none; stroke: #12b812; stroke-width: 1.300; stroke-linejoin: round; }
.sync { fill: none; stroke: #2a58e0; stroke-width: 1.500; stroke-linejoin: round; }
.dot-w { fill: #fff; }
.dot-y { fill: #f8f000; stroke: #806000; stroke-width: .5; }
.tag { fill: #fff; }
.tag-t { font: 13.500px "Liberation Sans", sans-serif; fill: #e8304c; }
.sig-1 { font: 16.200px "Liberation Sans", sans-serif; fill: #10c010; }
.sig-4 { font: 16.200px "Liberation Sans", sans-serif; fill: #2450c8; }
.axis text { font: 11.500px "Liberation Sans", sans-serif; fill: #c8c8c8; text-anchor: end; }
.axis-tick { stroke: #aaa; stroke-width: 1; }
.time text { font: 12px "Liberation Sans", sans-serif; fill: #c8dcc8; text-anchor: middle; }
.letters text { font: bold 20px "Liberation Sans", sans-serif; fill: #e8ffe8; text-anchor: middle; }
.deg text { font: 13px "Liberation Sans", sans-serif; fill: #333; text-anchor: middle; }
.big { font: 26px "Liberation Sans", sans-serif; }
.mid { font: 20px "Liberation Sans", sans-serif; }
.p { fill: #800080; }
.b { fill: #0a1ee0; }
.k { fill: #111; }

.timebar { height: 23px; background: linear-gradient(#fafafa, #f0f0f0); display: flex; align-items: center; flex: none; }
.tc-left { width: 258px; display: flex; align-items: center; height: 23px; padding-left: 2px; flex: none; }
.circ { width: 16px; height: 16px; flex: none; }
.t-combo { background: #fff; height: 23px; display: flex; align-items: center; justify-content: space-between; font-size: 16px; color: #222; padding: 0 4px; margin-left: 2px; flex: none; }
.t-c1 { width: 85px; margin-right: 4px; }
.t-c2 { width: 76px; margin-right: 8px; }
.nav { height: 23px; background: #f4f4f4; border-right: 1px solid #999; border-bottom: 1px solid #999; display: flex; align-items: center; justify-content: center; flex: none; }
.nav svg { width: 13px; height: 13px; }
.nav-s { width: 27px; margin-right: 2px; }
.nav-t { width: 20px; }
.track { flex: 1; height: 23px; background: #fbfbfb; }
.thumb { width: 20px; height: 22px; background: #ececec; border: 1px solid #ddd; border-right: 2px solid #777; border-bottom: 2px solid #777; margin-left: 427px; }
.tc-right { width: 321px; display: flex; align-items: center; flex: none; gap: 2px; }
.n20 { width: 20px; }
.n28 { width: 28px; }
.n26 { width: 26px; }
.n23 { width: 23px; }
.n30 { width: 30px; }
.nplus { width: 18px; height: 18px; margin: 0 2px; }
.frame-no { width: 72px; text-align: center; font-size: 14px; color: #222; }

.panel { height: 112px; flex: none; background: #f0f0f0; padding-top: 0; border-bottom: 1px solid #999; }
.strip { width: 766px; height: 7px; margin-left: 577px; border: 1px solid #bbb; border-top: 0; background: #fff; position: relative; }
.strip::before { content: ""; position: absolute; left: 0; right: 0; top: 2px; border-top: 1px dotted #5a80c8; }
.strip-a, .strip-b { position: absolute; top: 0; width: 0; height: 0; border-left: 3px solid transparent; border-right: 3px solid transparent; border-top: 5px solid #1a70c8; }
.strip-a { left: 7px; }
.strip-b { right: 5px; }
.groups { display: flex; align-items: flex-start; margin: 6px 0 0 461px; }
.channel { width: 378px; height: 90px; margin-top: 4px; margin-right: 7px; border: 1px solid #d0d0d0; border-radius: 5px; display: flex; flex: none; }
.chan-left { width: 263px; padding-left: 5px; margin-top: -5px; flex: none; }
.chan-btns { display: flex; gap: 2px; height: 22px; width: 270px; }
.ch { height: 22px; display: flex; align-items: center; justify-content: center; font-size: 15px; border: 1px solid #34587a; border-radius: 3px; flex: none; }
.w60 { width: 60px; } .w32 { width: 32px; } .w31 { width: 31px; }
.c-green { background: linear-gradient(#00d000, #40f060 50%, #20d040); font-weight: bold; }
.c-off { background: linear-gradient(#c8c8c8, #b4b4b4); color: #8a8a8a; }
.c-blue { background: linear-gradient(#2860e0, #4a88f8); font-weight: bold; }
.chan-sel { display: flex; align-items: center; margin: 9px 0 0 4px; }
.selector { width: 220px; height: 26px; background: #fff; border: 1px solid #40e040; display: flex; align-items: center; justify-content: space-between; padding: 0 1px 0 4px; font-size: 13.500px; color: #222; flex: none; }
.more { width: 22px; height: 22px; background: #f0f0f0; border: 1px solid #ccc; border-right-color: #777; border-bottom-color: #777; text-align: center; font-size: 12px; line-height: 14px; font-weight: bold; }
.meter { width: 24px; height: 24px; margin-left: 4px; flex: none; }
.chan-icons { display: flex; margin: 4px 0 0 5px; }
.ci { width: 31px; height: 28px; display: flex; align-items: center; justify-content: center; flex: none; }
.ci.on { background: #fafafa; border-left: 1px solid #ddd; border-top: 1px solid #ddd; }
.ci svg { width: 23px; height: 23px; }
.fx { font-family: "Liberation Serif", serif; font-weight: bold; color: #111; }
.fx em { font-size: 18px; }
.fx small { font-size: 11px; }
.knob-v { width: 112px; height: 74px; margin-top: 12px; flex: none; }
.knob-f { display: block; width: 127px; height: 75px; }
.knob-tick { stroke: #222; stroke-width: 1; fill: none; }
.knob-tick-l { stroke: #bbb; stroke-width: 1; fill: none; }
.knob-l text { font: 12px "Liberation Sans", sans-serif; fill: #333; text-anchor: middle; }
.knob-c { font: 16px "Liberation Sans", sans-serif; fill: #111; text-anchor: middle; }

.g { margin: 0; padding: 0; min-width: 0; height: 94px; border: 1px solid #d0d0d0; border-radius: 5px; flex: none; }
.g legend { padding: 0; margin-left: 8px; font-size: 15px; font-weight: bold; line-height: 16px; height: 16px; }
.g-sync legend { font-size: 14.500px; }
.lg-navy { color: #1a237e; }
.lg-grey { color: #777; }
.lg-pale { color: #a8bcd8; }
.g-freq { width: 129px; margin-right: 9px; }
.g-sync { width: 154px; margin-right: 7px; }
.g-ctrl { width: 218px; margin-right: 8px; }
.g-time { width: 83px; }

.sync-grid { display: grid; grid-template-columns: repeat(4, 35px); grid-template-rows: 36px 30px; margin: 3px 0 0 7px; align-items: center; justify-items: center; }
.si { width: 30px; height: 28px; display: flex; align-items: center; justify-content: center; }
.si.on { background: #fafafa; }
.si svg { width: 24px; height: 24px; }
.sync-combo { grid-column: span 2; width: 58px; height: 28px; justify-self: start; margin-left: 2px; border: 1px solid #bbb; background: #f4f4f4; display: flex; align-items: center; justify-content: space-between; padding: 0 10px 0 6px; font-size: 15px; color: #444; }
.sync-combo .arrow-down { border-top-color: #aaa; }

.ctrl-grid { display: grid; grid-template-columns: 42px 57px 57px 38px; grid-template-rows: 34px 34px; column-gap: 4px; row-gap: 3px; margin: 3px 0 0 4px; }
.cb { background: linear-gradient(#fdfdfd, #e8e8e8); border: 1px solid #34587a; border-radius: 3px; display: flex; align-items: center; justify-content: center; }
.cb svg { width: 26px; height: 28px; }
.cb svg.wide { width: 46px; height: 26px; }
.cb-grey { border-color: #c4c4c4; background: #ececec; }
.cb-red { border-color: #e05050; }
.cb-start { grid-column: span 2; justify-content: flex-start; padding-left: 10px; font-size: 14px; }
.cb-start svg.play { width: 16px; height: 30px; }
.cb-start b { margin-left: 33px; }
.cb-num { color: #0a8020; font-size: 16px; font-weight: bold; border-color: #4080c8; background: #fbfbfb; }
.auto { font: bold 7px "Liberation Sans", sans-serif; fill: #111; text-anchor: middle; }

.timer-col { display: flex; flex-direction: column; gap: 3px; margin: 3px 0 0 9px; }
.tmb { width: 61px; height: 34px; background: linear-gradient(#fafafa, #e4e4e4); border: 1px solid #999; border-radius: 2px; display: flex; align-items: center; justify-content: space-between; padding: 0 6px 0 7px; }
.tmb svg { width: 32px; height: 28px; }

.status { height: 22px; flex: none; display: flex; align-items: center; font-size: 13.500px; color: #222; background: #f0f0f0; }
.st-left { width: 238px; padding-left: 4px; flex: none; white-space: nowrap; }
.st-msg { width: 1617px; flex: none; white-space: nowrap; border-right: 1px solid #bbb; font-size: 14px; }
.st-msg span { background: #ffff10; padding: 1px 4px 1px 8px; border-radius: 3px; display: inline-block; width: 756px; overflow: hidden; }
.st-ver { padding-left: 7px; }
.blackline { height: 2px; background: #111; flex: none; }
```
